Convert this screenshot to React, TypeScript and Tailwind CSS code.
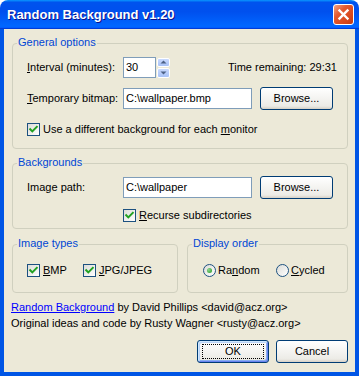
import React from "react";

const Check = () => (
  <span className="w-[13px] h-[13px] shrink-0 border border-[#1c5180] bg-[linear-gradient(135deg,#dcdcd7,#ffffff)] flex items-center justify-center">
    <svg width="11" height="11" viewBox="0 0 11 11">
      <path d="M2.2 5.2 L4.3 7.4 L8.8 2.8" fill="none" stroke="#21a121" strokeWidth="2" strokeLinecap="square" />
    </svg>
  </span>
);

const Radio = ({ on }: { on?: boolean }) => (
  <span className="w-[13px] h-[13px] shrink-0 rounded-full border border-[#1c5180] bg-[linear-gradient(135deg,#dcdcd7,#ffffff)] flex items-center justify-center">
    {on && <span className="w-[5px] h-[5px] rounded-full bg-[radial-gradient(circle_at_35%_35%,#8ed48e,#1e9a1e)]" />}
  </span>
);

const Btn = ({ children, def, w }: { children: React.ReactNode; def?: boolean; w: string }) => (
  <button
    className={`${w} h-[23px] shrink-0 rounded-[3px] border border-[#003c74] bg-[linear-gradient(180deg,#ffffff,#ecebe6_86%,#d6d0c5)] text-black flex items-center justify-center ${
      def ? "shadow-[inset_1px_1px_#cee7ff,inset_-1px_-1px_#6982ee,inset_2px_2px_#bcd4f6,inset_-2px_-2px_#89adf1]" : ""
    }`}
  >
    {def ? (
      <span className="border border-dotted border-black w-[calc(100%-8px)] h-[15px] flex items-center justify-center">{children}</span>
    ) : (
      children
    )}
  </button>
);

const Field = ({ value, w }: { value: string; w: string }) => (
  <div className={`${w} h-[21px] shrink-0 border border-[#7f9db9] bg-white pl-[2px] flex items-center text-black`}>{value}</div>
);

const Group = ({ title, className, children }: { title: string; className: string; children: React.ReactNode }) => (
  <div className={`relative border border-[#d0d0bf] rounded-[4px] ${className}`}>
    <span className="absolute -top-[8px] left-[4px] px-[1px] leading-[13px] bg-[#ece9d8] text-[#0046d5]">{title}</span>
    {children}
  </div>
);

export default function App() {
  return (
    <div className="w-[359px] h-[376px] bg-white font-['Liberation_Sans',Arial,sans-serif] text-[11px] leading-[13px] text-black flex flex-col select-none">
      {/* title bar */}
      <div className="h-[29px] shrink-0 rounded-t-[8px] bg-[linear-gradient(180deg,#0997ff,#0053ee_8%,#0050ee_40%,#0066ff_88%,#0066ff_93%,#005bff_95%,#003dd7_96%,#003dd7)] flex items-center justify-between pl-[7px] pr-[5px]">
        <span className="text-white font-bold text-[13px] leading-[16px] [text-shadow:1px_1px_#0f1089]">Random Background v1.20</span>
        <span className="w-[21px] h-[21px] rounded-[3px] border border-white bg-[linear-gradient(135deg,#f3a585,#e45a30_35%,#d6461c_75%,#c03a12)] flex items-center justify-center">
          <svg width="13" height="13" viewBox="0 0 13 13">
            <path d="M2.5 2.5 L10.5 10.5 M10.5 2.5 L2.5 10.5" stroke="#ffffff" strokeWidth="2.4" strokeLinecap="square" />
          </svg>
        </span>
      </div>

      {/* body */}
      <div className="flex-1 bg-[#ece9d8] border-x-4 border-b-4 border-[#0055e5] flex flex-col">
        <Group title="General options" className="mt-[14px] ml-[8px] mr-[7px] pt-[13px] pb-[12px] pl-[14px] pr-[10px]">
          <div className="h-[21px] flex items-center">
            <span className="w-[96px]"><u>I</u>nterval (minutes):</span>
            <Field value="30" w="w-[33px]" />
            <div className="ml-[1px] w-[13px] h-[20px] flex flex-col gap-[1px]">
              {[0, 1].map((i) => (
                <div key={i} className="flex-1 rounded-[2px] border border-white bg-[linear-gradient(180deg,#c9d9fd,#a8c2f7)] flex items-center justify-center">
                  <svg width="7" height="4" viewBox="0 0 7 4">
                    <path d={i === 0 ? "M0.5 3.5 L3.5 0.5 L6.5 3.5 Z" : "M0.5 0.5 L3.5 3.5 L6.5 0.5 Z"} fill="#4d6185" />
                  </svg>
                </div>
              ))}
            </div>
            <span className="ml-auto">Time remaining: 29:31</span>
          </div>
          <div className="mt-[9px] h-[23px] flex items-center">
            <span className="w-[96px]"><u>T</u>emporary bitmap:</span>
            <Field value="C:\wallpaper.bmp" w="w-[129px]" />
            <span className="ml-[8px]"><Btn w="w-[73px]">Browse...</Btn></span>
          </div>
          <div className="mt-[13px] h-[13px] flex items-center gap-[3px]">
            <Check />
            <span>Use a different background for each <u>m</u>onitor</span>
          </div>
        </Group>

        <Group title="Backgrounds" className="mt-[14px] ml-[8px] mr-[7px] pt-[12px] pb-[6px] pl-[14px] pr-[10px]">
          <div className="h-[23px] flex items-center">
            <span className="w-[96px]">Image path:</span>
            <Field value="C:\wallpaper" w="w-[129px]" />
            <span className="ml-[8px]"><Btn w="w-[73px]">Browse...</Btn></span>
          </div>
          <div className="mt-[10px] ml-[96px] h-[13px] flex items-center gap-[3px]">
            <Check />
            <span><u>R</u>ecurse subdirectories</span>
          </div>
        </Group>

        <div className="mt-[15px] ml-[8px] mr-[7px] flex gap-[9px]">
          <Group title="Image types" className="w-[166px] pt-[19px] pb-[15px] pl-[14px]">
            <div className="h-[13px] flex items-center">
              <div className="w-[56px] flex items-center gap-[3px]">
                <Check />
                <span><u>B</u>MP</span>
              </div>
              <div className="flex items-center gap-[3px]">
                <Check />
                <span><u>J</u>PG/JPEG</span>
              </div>
            </div>
          </Group>
          <Group title="Display order" className="flex-1 pt-[19px] pb-[15px] pl-[15px]">
            <div className="h-[13px] flex items-center">
              <div className="w-[73px] flex items-center gap-[2px]">
                <Radio on />
                <span>Ra<u>n</u>dom</span>
              </div>
              <div className="flex items-center gap-[2px]">
                <Radio />
                <span><u>C</u>ycled</span>
              </div>
            </div>
          </Group>
        </div>

        <div className="mt-[6px] ml-[7px] leading-[16px]">
          <div>
            <span className="text-[#0000ff] underline">Random Background</span> by David Phillips &lt;david@acz.org&gt;
          </div>
          <div>Original ideas and code by Rusty Wagner &lt;rusty@acz.org&gt;</div>
        </div>

        <div className="mt-[9px] mr-[7px] flex justify-end gap-[7px]">
          <Btn w="w-[72px]" def>OK</Btn>
          <Btn w="w-[72px]">Cancel</Btn>
        </div>
      </div>
    </div>
  );
}
